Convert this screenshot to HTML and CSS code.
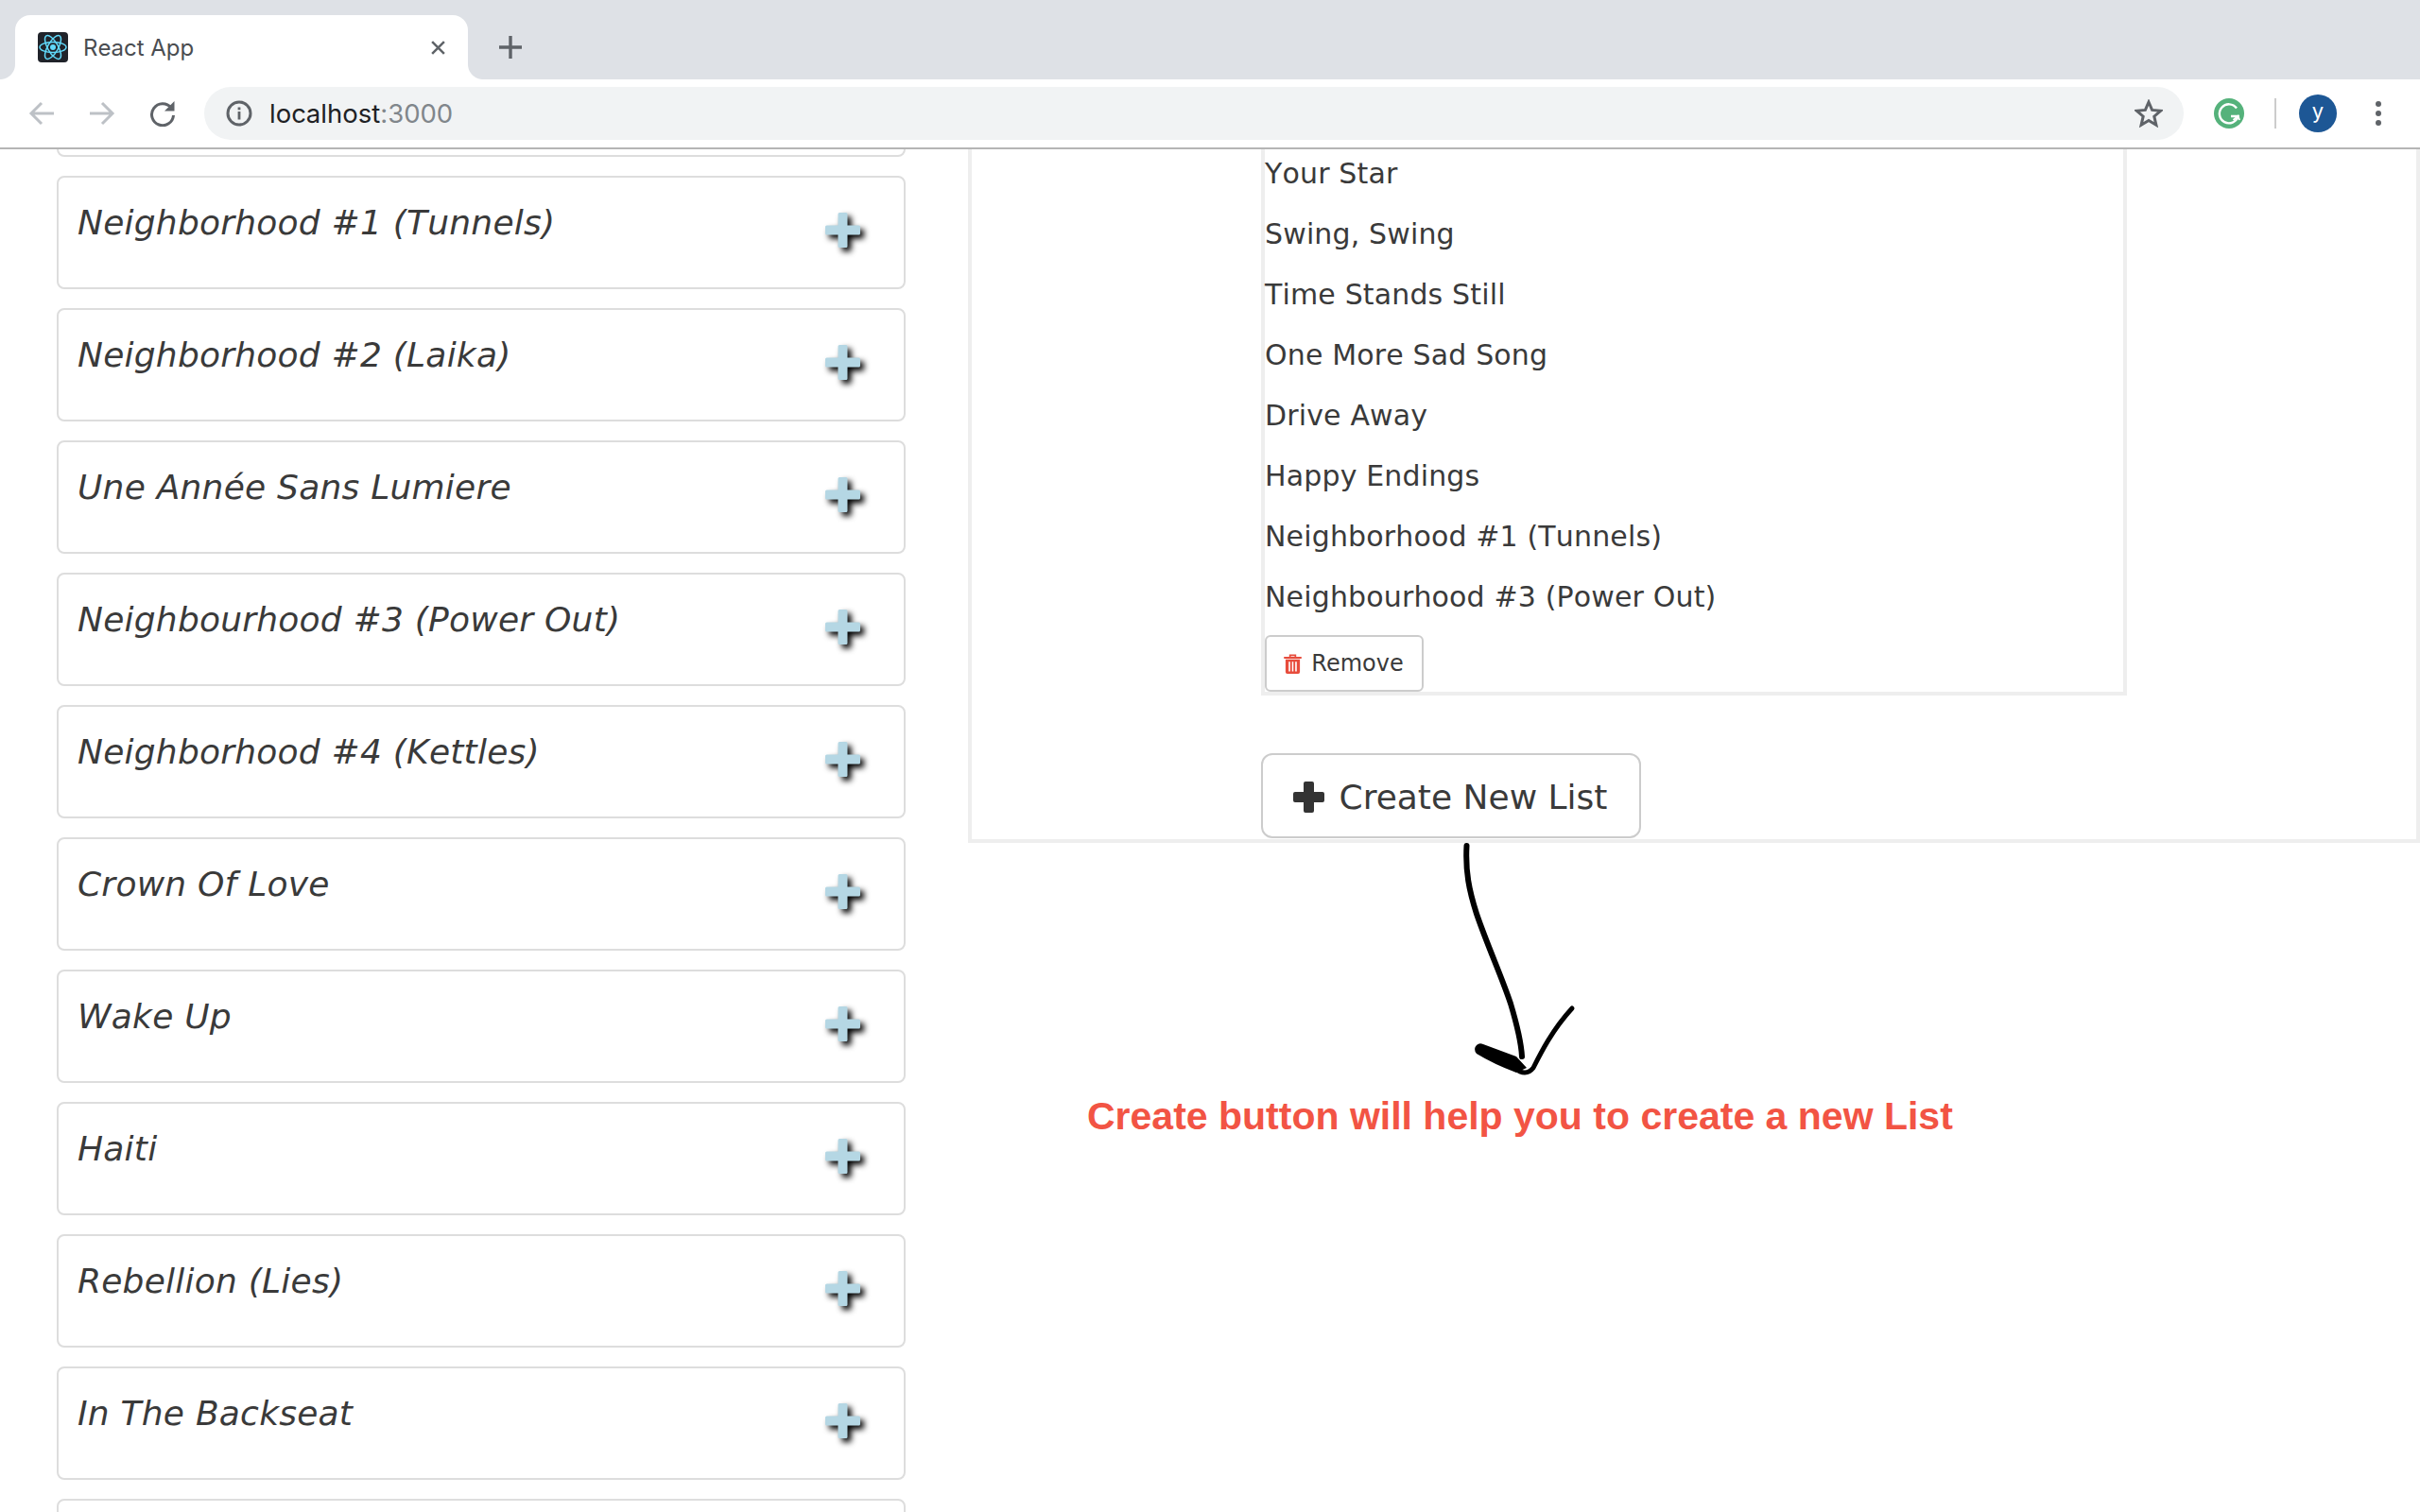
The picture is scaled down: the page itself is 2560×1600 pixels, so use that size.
FILE: index.html
```html
<!DOCTYPE html>
<html lang="en">
  <head>
    <meta charset="UTF-8" />
    <title>React App</title>
    <link rel="stylesheet" href="styles.css">
  </head>
  <body>
    <div class="tabstrip">
      <div class="tab">
        <svg class="favicon" viewBox="0 0 32 32">
          <rect width="32" height="32" rx="4" fill="#20232a" />
          <g fill="none" stroke="#61dafb" stroke-width="1.5">
            <ellipse cx="16" cy="16" rx="14" ry="5.5" />
            <ellipse cx="16" cy="16" rx="14" ry="5.5" transform="rotate(60 16 16)" />
            <ellipse cx="16" cy="16" rx="14" ry="5.5" transform="rotate(120 16 16)" />
          </g>
          <circle cx="16" cy="16" r="3" fill="#61dafb" />
        </svg>
        <span class="tab-title">React App</span>
        <svg class="tab-close" viewBox="0 0 16 16">
          <path d="M2 2 L14 14 M14 2 L2 14" stroke="#5f6368" stroke-width="2.4" />
        </svg>
      </div>
      <svg class="new-tab" viewBox="0 0 24 24">
        <path d="M12 0 V24 M0 12 H24" stroke="#5f6368" stroke-width="3.4" stroke-linecap="round" />
      </svg>
    </div>

    <div class="toolbar">
      <svg class="nav-icon" viewBox="0 0 28 28">
        <path d="M27 14 H3 M14 3 L3 14 L14 25" fill="none" stroke="#bdc1c6" stroke-width="3" />
      </svg>
      <svg class="nav-icon" viewBox="0 0 28 28">
        <path d="M1 14 H25 M14 3 L25 14 L14 25" fill="none" stroke="#bdc1c6" stroke-width="3" />
      </svg>
      <svg class="nav-icon" viewBox="0 0 28 28">
        <path d="M23 8 A11.5 11.5 0 1 0 25.5 16" fill="none" stroke="#5f6368" stroke-width="3" />
        <path d="M26.5 1 V11.5 H16 Z" fill="#5f6368" />
      </svg>
      <div class="omnibox">
        <svg class="info-icon" viewBox="0 0 28 28">
          <circle cx="14" cy="14" r="12" fill="none" stroke="#5f6368" stroke-width="3" />
          <rect x="12.6" y="12" width="2.8" height="8.5" fill="#5f6368" />
          <rect x="12.6" y="7.5" width="2.8" height="2.8" fill="#5f6368" />
        </svg>
        <span class="url">localhost<span class="url-port">:3000</span></span>
        <svg class="star-icon" viewBox="0 0 30 30">
          <path d="M15 3 L18.6 11.4 L27.8 12.2 L20.8 18.2 L22.9 27.2 L15 22.4 L7.1 27.2 L9.2 18.2 L2.2 12.2 L11.4 11.4 Z" fill="none" stroke="#5f6368" stroke-width="3" />
        </svg>
      </div>
      <svg class="grammarly" viewBox="0 0 32 32">
        <circle cx="16" cy="16" r="16" fill="#55b27b" />
        <path d="M24 10.5 A10 10 0 1 0 25.5 19 H18" fill="none" stroke="#fff" stroke-width="2.4" />
        <path d="M20.5 23 L25.5 19 L27 23" fill="none" stroke="#fff" stroke-width="2" />
      </svg>
      <div class="toolbar-sep"></div>
      <div class="avatar">y</div>
      <div class="dots">
        <span></span>
        <span></span>
        <span></span>
      </div>
    </div>

    <div class="page">
      <div class="song-col">
        <div class="song-card"></div>
        <div class="song-card">
          <span class="song-name">Neighborhood #1 (Tunnels)</span>
          <svg class="add-icon"><use href="#plus" /></svg>
        </div>
        <div class="song-card">
          <span class="song-name">Neighborhood #2 (Laika)</span>
          <svg class="add-icon"><use href="#plus" /></svg>
        </div>
        <div class="song-card">
          <span class="song-name">Une Année Sans Lumiere</span>
          <svg class="add-icon"><use href="#plus" /></svg>
        </div>
        <div class="song-card">
          <span class="song-name">Neighbourhood #3 (Power Out)</span>
          <svg class="add-icon"><use href="#plus" /></svg>
        </div>
        <div class="song-card">
          <span class="song-name">Neighborhood #4 (Kettles)</span>
          <svg class="add-icon"><use href="#plus" /></svg>
        </div>
        <div class="song-card">
          <span class="song-name">Crown Of Love</span>
          <svg class="add-icon"><use href="#plus" /></svg>
        </div>
        <div class="song-card">
          <span class="song-name">Wake Up</span>
          <svg class="add-icon"><use href="#plus" /></svg>
        </div>
        <div class="song-card">
          <span class="song-name">Haiti</span>
          <svg class="add-icon"><use href="#plus" /></svg>
        </div>
        <div class="song-card">
          <span class="song-name">Rebellion (Lies)</span>
          <svg class="add-icon"><use href="#plus" /></svg>
        </div>
        <div class="song-card">
          <span class="song-name">In The Backseat</span>
          <svg class="add-icon"><use href="#plus" /></svg>
        </div>
        <div class="song-card"></div>
      </div>

      <div class="list-col">
        <div class="list-panel">
          <div class="list-box">
            <p>Your Star</p>
            <p>Swing, Swing</p>
            <p>Time Stands Still</p>
            <p>One More Sad Song</p>
            <p>Drive Away</p>
            <p>Happy Endings</p>
            <p>Neighborhood #1 (Tunnels)</p>
            <p>Neighbourhood #3 (Power Out)</p>
            <button class="remove-btn">
              <svg class="trash-icon" viewBox="0 0 20 22">
                <path d="M7 3.5 V1.5 H13 V3.5" fill="none" stroke="#e74c3c" stroke-width="1.8" />
                <rect y="3" width="20" height="2.2" rx="1" fill="#e74c3c" />
                <path d="M2 6 H18 V20 Q18 22 16 22 H4 Q2 22 2 20 Z M5.5 8.5 V19.5 H7.2 V8.5 Z M9.2 8.5 V19.5 H10.8 V8.5 Z M12.8 8.5 V19.5 H14.5 V8.5 Z" fill="#e74c3c" fill-rule="evenodd" />
              </svg>
              Remove
            </button>
          </div>
          <button class="create-btn">
            <svg class="create-icon" viewBox="0 0 33 33">
              <path d="M11 2 Q11 0 13 0 H20 Q22 0 22 2 V11 H31 Q33 11 33 13 V20 Q33 22 31 22 H22 V31 Q22 33 20 33 H13 Q11 33 11 31 V22 H2 Q0 22 0 20 V13 Q0 11 2 11 H11 Z" fill="#333" />
            </svg>
            Create New List
          </button>
        </div>
        <svg class="note-arrow" viewBox="0 0 150 250">
          <path d="M21.5 3 C20 30 24 50 32 75 C44 110 58 140 68 170 C74 190 79 208 80 226" fill="none" stroke="#000" stroke-width="6" stroke-linecap="round" />
          <path d="M32 214 Q35 211 39 213 L74 226 L85 238 L74 243 Q50 234 32 223 Q28 218 32 214 Z" fill="#000" />
          <path d="M72 238 Q84 248 92 238 C100 222 112 198 133 175" fill="none" stroke="#000" stroke-width="5" stroke-linecap="round" />
        </svg>
        <div class="note-text">Create button will help you to create a new List</div>
      </div>
    </div>

    <svg class="svg-defs">
      <symbol id="plus" viewBox="0 0 37 37">
        <path d="M13.5 1.5 Q13.5 0 15 0 H22 Q23.5 0 23.5 1.5 V13.5 H35.5 Q37 13.5 37 15 V22 Q37 23.5 35.5 23.5 H23.5 V35.5 Q23.5 37 22 37 H15 Q13.5 37 13.5 35.5 V23.5 H1.5 Q0 23.5 0 22 V15 Q0 13.5 1.5 13.5 H13.5 Z" fill="#b5d7e4" />
      </symbol>
    </svg>
  </body>
</html>
```

FILE: styles.css
```css
body {
  margin: 0;
  height: 1600px;
  overflow: hidden;
  background: #fff;
  font-family: "DejaVu Sans", sans-serif;
  font-kerning: none;
  color: #333;
}

.svg-defs {
  width: 0;
  height: 0;
  display: block;
}

/* browser chrome */
.tabstrip {
  height: 84px;
  box-sizing: border-box;
  padding: 16px 0 0 16px;
  display: flex;
  align-items: flex-start;
  background: #dee1e6;
}

.tab {
  position: relative;
  width: 479px;
  height: 68px;
  box-sizing: border-box;
  padding: 0 24px 0 24px;
  display: flex;
  align-items: center;
  background: #fff;
  border-radius: 16px 16px 0 0;
}

.tab::before,
.tab::after {
  content: "";
  position: absolute;
  bottom: 0;
  width: 16px;
  height: 16px;
}

.tab::before {
  left: -16px;
  background: radial-gradient(circle at 0 0, #dee1e6 15.5px, #fff 16.5px);
}

.tab::after {
  right: -16px;
  background: radial-gradient(circle at 100% 0, #dee1e6 15.5px, #fff 16.5px);
}

.favicon {
  width: 32px;
  height: 32px;
  flex: none;
}

.tab-title {
  margin-left: 16px;
  flex: 1;
  font-family: Inter, sans-serif;
  font-size: 24px;
  color: #4a4d51;
}

.tab-close {
  width: 17px;
  height: 17px;
  margin-right: -1px;
}

.new-tab {
  width: 24px;
  height: 24px;
  margin: 22px 0 0 33px;
}

.toolbar {
  height: 74px;
  box-sizing: border-box;
  display: flex;
  align-items: center;
  background: #fff;
  border-bottom: 2px solid #b5b5b5;
}

.nav-icon {
  width: 28px;
  height: 28px;
  margin-left: 30px;
  margin-right: 6px;
  flex: none;
}

.omnibox {
  margin-left: 24px;
  width: 2094px;
  height: 56px;
  box-sizing: border-box;
  padding: 0 22px 0 22px;
  display: flex;
  align-items: center;
  border-radius: 28px;
  background: #f1f3f4;
}

.info-icon {
  width: 28px;
  height: 28px;
  margin-left: 1px;
  flex: none;
}

.url {
  margin-left: 18px;
  flex: 1;
  font-family: Inter, sans-serif;
  font-size: 27.5px;
  color: #202124;
}

.url-port {
  color: #80868b;
}

.star-icon {
  width: 30px;
  height: 30px;
  flex: none;
}

.grammarly {
  width: 32px;
  height: 32px;
  margin-left: 32px;
  flex: none;
}

.toolbar-sep {
  width: 2px;
  height: 32px;
  margin-left: 32px;
  background: #ccc;
}

.avatar {
  width: 40px;
  height: 40px;
  margin-left: 24px;
  border-radius: 50%;
  background: #1d5795;
  color: #fff;
  font-family: Inter, sans-serif;
  font-size: 22px;
  line-height: 34px;
  text-align: center;
}

.dots {
  margin-left: 41px;
  display: flex;
  flex-direction: column;
  gap: 4px;
}

.dots span {
  width: 6px;
  height: 6px;
  border-radius: 50%;
  background: #5f6368;
}

/* page content */
.page {
  height: 1442px;
  display: flex;
  overflow: hidden;
}

.song-col {
  width: 1024px;
  flex: none;
  box-sizing: border-box;
  padding: 0 66px 0 60px;
  margin-top: -112px;
}

.song-card {
  position: relative;
  height: 120px;
  box-sizing: border-box;
  margin-bottom: 20px;
  padding: 20px 20px;
  border: 2px solid #ddd;
  border-radius: 8px;
}

.song-name {
  font-size: 36px;
  font-style: italic;
  line-height: 56px;
  letter-spacing: 0.23px;
  color: #3a3a3a;
}

.add-icon {
  position: absolute;
  top: 37px;
  right: 46px;
  width: 37px;
  height: 37px;
  overflow: visible;
  filter: drop-shadow(4px 4px 3px #000);
}

.list-col {
  flex: 1;
  min-width: 0;
}

.list-panel {
  box-sizing: border-box;
  height: 734px;
  padding-left: 306px;
  border: 4px solid #eee;
  border-top: none;
}

.list-box {
  width: 916px;
  height: 578px;
  box-sizing: border-box;
  padding-top: 2px;
  border: 4px solid #eee;
  border-top: none;
}

.list-box p {
  margin: 0 0 16px;
  font-size: 30px;
  line-height: 48px;
  letter-spacing: 0.15px;
  color: #3a3a3a;
}

.remove-btn {
  width: 168px;
  height: 60px;
  padding: 0 1px 0 0;
  display: flex;
  align-items: center;
  justify-content: center;
  gap: 10px;
  background: #fff;
  border: 2px solid #ccc;
  border-radius: 6px;
  font-family: "DejaVu Sans", sans-serif;
  font-size: 24px;
  color: #3a3a3a;
}

.trash-icon {
  width: 19px;
  height: 21px;
}

.create-btn {
  width: 402px;
  height: 90px;
  margin-top: 61px;
  padding: 2px 2px 0 0;
  display: flex;
  align-items: center;
  justify-content: center;
  gap: 16px;
  background: #fff;
  border: 2px solid #ccc;
  border-radius: 12px;
  font-family: "DejaVu Sans", sans-serif;
  font-size: 36px;
  color: #3a3a3a;
}

.create-icon {
  width: 33px;
  height: 33px;
}

.note-arrow {
  display: block;
  width: 150px;
  height: 250px;
  margin-left: 506px;
}

.note-text {
  margin: 14px 0 0 126px;
  font-family: "Liberation Sans", sans-serif;
  font-size: 41px;
  font-weight: bold;
  line-height: 50px;
  color: #f25444;
}
```
